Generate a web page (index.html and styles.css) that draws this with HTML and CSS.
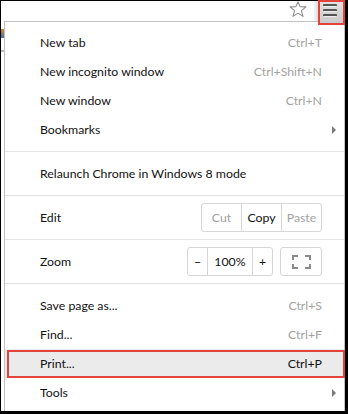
FILE: index.html
```html
<!DOCTYPE html>
<html lang="en">
<head>
    <meta charset="UTF-8">
    <meta name="viewport" content="width=device-width, initial-scale=1.0">
    <title>Chrome menu</title>
    <link rel="stylesheet" href="styles.css">
</head>
<body>
<div class="screen">
    <div class="toolbar">
        <div class="omnibox">
            <svg class="star" width="18" height="17" viewBox="0 0 18 17">
                <polygon points="9,0.8 11.1,5.6 17,5.9 12.4,9.6 14,15.4 9,12.1 4,15.4 5.6,9.6 1,5.9 6.9,5.6"
                         fill="none" stroke="#8c8c8c" stroke-width="1.1" stroke-linejoin="round"/>
            </svg>
        </div>
        <div class="toolbar-edge"></div>
        <div class="menu-btn">
            <span class="bar"></span>
            <span class="bar"></span>
            <span class="bar"></span>
        </div>
    </div>

    <div class="main">
        <div class="page-strip">
            <div class="page-icon"></div>
            <div class="page-line"></div>
        </div>

        <div class="menu">
            <div class="item"><span class="label">New tab</span><span class="shortcut">Ctrl+T</span></div>
            <div class="item"><span class="label">New incognito window</span><span class="shortcut">Ctrl+Shift+N</span></div>
            <div class="item"><span class="label">New window</span><span class="shortcut">Ctrl+N</span></div>
            <div class="item"><span class="label">Bookmarks</span><span class="arrow"></span></div>

            <div class="sep"></div>
            <div class="item"><span class="label">Relaunch Chrome in Windows 8 mode</span></div>

            <div class="sep"></div>
            <div class="item">
                <span class="label">Edit</span>
                <div class="btn-group">
                    <span class="seg seg-edit disabled">Cut</span>
                    <span class="seg seg-edit">Copy</span>
                    <span class="seg seg-edit disabled">Paste</span>
                </div>
            </div>

            <div class="sep"></div>
            <div class="item">
                <span class="label">Zoom</span>
                <div class="btn-group">
                    <span class="seg seg-small">&minus;</span>
                    <span class="seg seg-pct">100%</span>
                    <span class="seg seg-small">+</span>
                </div>
                <div class="btn-full">
                    <svg width="19" height="14" viewBox="0 0 19 14">
                        <path d="M1 5V1H6M13 1H18V5M18 9V13H13M6 13H1V9" fill="none" stroke="#8a8a8a" stroke-width="2"/>
                    </svg>
                </div>
            </div>

            <div class="sep"></div>
            <div class="item"><span class="label">Save page as...</span><span class="shortcut">Ctrl+S</span></div>
            <div class="item"><span class="label">Find...</span><span class="shortcut">Ctrl+F</span></div>
            <div class="item active"><span class="label">Print...</span><span class="shortcut">Ctrl+P</span></div>
            <div class="item"><span class="label">Tools</span><span class="arrow"></span></div>
        </div>
    </div>

    <div class="mark mark-btn"></div>
    <div class="mark mark-print"></div>
</div>
</body>
</html>
```

FILE: styles.css
```css
html, body {
    margin: 0;
    background: #000;
}

body {
    width: 348px;
    height: 414px;
    overflow: hidden;
    font-family: Lato, "Open Sans", sans-serif;
    font-size: 12.3px;
    color: #111;
}

.screen {
    position: relative;
    width: 344px;
    height: 410px;
    margin: 1px 3px 3px 1px;
    background: #fff;
}

.toolbar {
    display: flex;
    height: 20px;
}

.omnibox {
    flex: 1;
    display: flex;
    justify-content: flex-end;
    align-items: flex-start;
    background: #fff;
}

.star {
    display: block;
    margin: 0 7px 0 0;
}

.toolbar-edge {
    width: 5px;
    background: linear-gradient(to right, #f4f4f4, #dcdcdc);
}

.menu-btn {
    position: relative;
    z-index: 2;
    width: 26px;
    height: 23px;
    box-sizing: border-box;
    padding: 3px 0 0 4px;
    display: flex;
    flex-direction: column;
    gap: 2px;
    background: linear-gradient(to bottom, #e2e2e2, #c9c9c9);
}

.bar {
    display: block;
    width: 14px;
    height: 2px;
    background: #555;
    border-bottom: 1px solid #eee;
    border-radius: 1px;
}

.main {
    display: flex;
    height: 390px;
}

.page-strip {
    width: 3px;
    background: #fff;
}

.page-icon {
    height: 9px;
    margin-top: 8px;
    background: linear-gradient(to bottom, #d58a2a, #3d6fb5);
}

.page-line {
    height: 2px;
    margin-top: 12px;
    background: #bdbdbd;
}

.menu {
    flex: 1;
    border: 1px solid #c2c2c2;
    border-bottom: none;
    padding-top: 6px;
    background: #fff;
}

.item {
    display: flex;
    align-items: center;
    height: 29px;
    padding: 0 22px 0 35px;
}

.item .label {
    flex: 1;
    white-space: nowrap;
}

.shortcut {
    color: #a2a2a2;
}

.active {
    background: #ebebeb;
}

.active .shortcut {
    color: #111;
}

.arrow {
    width: 0;
    height: 0;
    margin-right: -14px;
    border-left: 4px solid #7a7a7a;
    border-top: 4px solid transparent;
    border-bottom: 4px solid transparent;
}

.sep {
    height: 1px;
    margin: 7px 0;
    background: #e4e4e4;
}

.btn-group {
    display: flex;
    height: 29px;
    box-sizing: border-box;
    border: 1px solid #d6d6d6;
    border-radius: 3px;
}

.seg {
    display: flex;
    align-items: center;
    justify-content: center;
    border-left: 1px solid #d6d6d6;
}

.seg:first-child {
    border-left: none;
}

.seg-edit {
    width: 39px;
}

.disabled {
    color: #a2a2a2;
}

.seg-small {
    width: 19px;
}

.seg-pct {
    width: 44px;
}

.btn-full {
    display: flex;
    align-items: center;
    justify-content: center;
    width: 42px;
    height: 29px;
    margin-left: 7px;
    box-sizing: border-box;
    border: 1px solid #d6d6d6;
    border-radius: 3px;
}

.mark {
    position: absolute;
    z-index: 3;
    box-sizing: border-box;
    border: 2px solid #e4433b;
}

.mark-btn {
    left: 317px;
    top: -1px;
    width: 27px;
    height: 25px;
}

.mark-print {
    left: 6px;
    top: 349px;
    width: 338px;
    height: 28px;
}
```
